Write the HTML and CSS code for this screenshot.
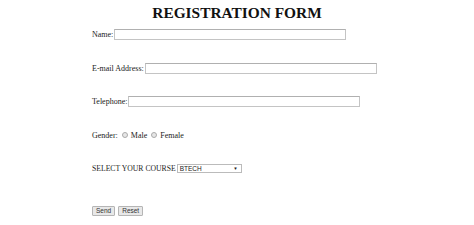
FILE: index.html
```html
<!DOCTYPE html>
<html lang="en">
<head>
  <meta charset="UTF-8" />
  <title>Registration Form</title>
  <link rel="stylesheet" href="styles.css">
</head>
<body>
  <h1 class="title">REGISTRATION FORM</h1>

  <form class="form">
    <div class="row">
      <label for="name">Name:</label>
      <input type="text" id="name" class="field" />
    </div>

    <div class="row">
      <label for="email">E-mail Address:</label>
      <input type="text" id="email" class="field" />
    </div>

    <div class="row">
      <label for="phone">Telephone:</label>
      <input type="text" id="phone" class="field" />
    </div>

    <div class="row">
      <span>Gender:</span>
      <span class="radio"></span><span>Male</span>
      <span class="radio"></span><span>Female</span>
    </div>

    <div class="row">
      <label for="course" class="course-label">SELECT YOUR COURSE</label>
      <div class="select" id="course">
        <span>BTECH</span>
        <span class="arrow">&#9660;</span>
      </div>
    </div>

    <div class="row buttons">
      <button type="submit" class="btn">Send</button>
      <button type="reset" class="btn">Reset</button>
    </div>
  </form>
</body>
</html>
```

FILE: styles.css
```css
body {
  font-family: "Liberation Serif", "Times New Roman", serif;
  background-color: white;
  color: #222;
  margin: 0;
  padding: 0;
}

.title {
  margin: 0;
  padding-top: 5px;
  text-align: center;
  font-size: 15.4px;
  line-height: 16px;
  font-weight: bold;
  color: #111;
}

.form {
  display: flex;
  flex-direction: column;
  gap: 22.5px;
  padding-left: 92px;
  margin-top: 8px;
  font-size: 8px;
}

.row {
  display: flex;
  align-items: center;
  height: 11px;
}

.field {
  box-sizing: border-box;
  width: 232px;
  height: 11px;
  margin: 0 0 0 1px;
  padding: 0;
  border: 1px solid #c4c4c4;
  border-top-color: #b0b0b0;
  background: white;
}

.radio {
  box-sizing: border-box;
  width: 6px;
  height: 6px;
  border-radius: 50%;
  border: 1px solid #aaa;
  background: #e6e6e6;
  margin: 0 3px 0 4px;
}

.course-label {
  font-size: 7.7px;
}

.select {
  box-sizing: border-box;
  display: flex;
  align-items: center;
  justify-content: space-between;
  width: 65px;
  height: 9px;
  margin-left: 1px;
  padding: 0 3px 0 2px;
  border: 1px solid #bbb;
  font-family: "Liberation Sans", Arial, sans-serif;
  font-size: 6.5px;
}

.arrow {
  font-size: 4.5px;
}

.buttons {
  margin-top: 8.5px;
  gap: 3px;
}

.btn {
  box-sizing: border-box;
  height: 10px;
  padding: 0 3px;
  font-family: "Liberation Sans", Arial, sans-serif;
  font-size: 6.5px;
  line-height: 8px;
  color: #333;
  background: #e8e8e8;
  border: 1px solid #b5b5b5;
  border-radius: 1px;
}
```
